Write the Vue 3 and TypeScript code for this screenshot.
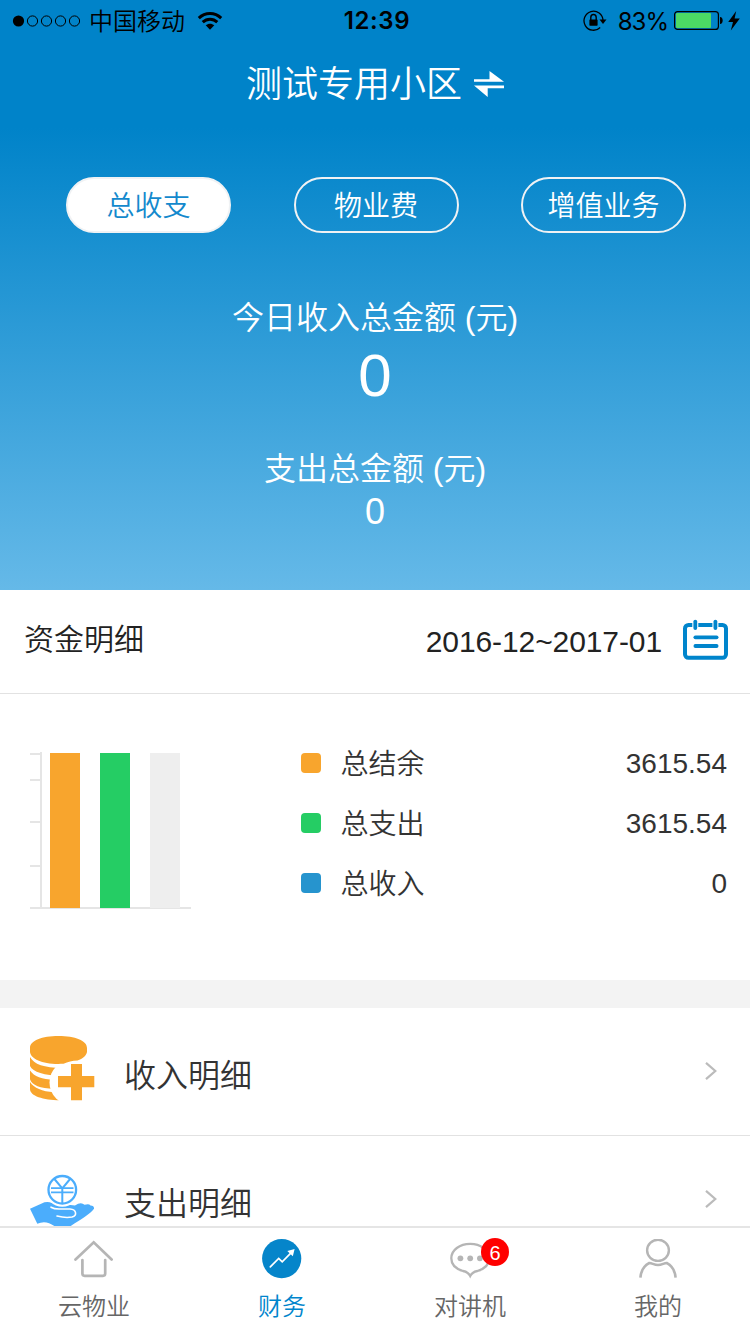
<script setup lang="ts">
import { ref } from 'vue'

interface Amount {
  label: string
  value: string
  tone: string
}

interface Bar {
  x: number
  color: string
}

const segments = ['总收支', '物业费', '增值业务']
const activeSegment = ref(0)

const amounts: Amount[] = [
  { label: '总结余', value: '3615.54', tone: 'orange' },
  { label: '总支出', value: '3615.54', tone: 'green' },
  { label: '总收入', value: '0', tone: 'blue' },
]

const bars: Bar[] = [
  { x: 20, color: '#f8a52d' },
  { x: 70, color: '#25cd64' },
  { x: 120, color: '#eeeeee' },
]
const ticks = [1, 27, 69, 113]
const signalDots = [20.5, 34.5, 48.5, 62.5]
</script>

<template>
  <div class="screen">
    <header class="hero">
      <div class="status">
        <div class="status-side">
          <svg class="signal" width="70" height="14" viewBox="0 0 70 14">
            <circle cx="6.5" cy="7" r="5.6" />
            <circle v-for="x in signalDots" :key="x" :cx="x" cy="7" r="5.1" fill="none" stroke="#000" stroke-width="1" />
          </svg>
          <span class="carrier">中国移动</span>
          <svg class="wifi" width="26" height="20" viewBox="0 0 26 20">
            <g fill="none" stroke="#000" stroke-width="3">
              <path d="M1.8 7.2C8.2 1 17.8 1 24.2 7.2" />
              <path d="M5.7 11.2C10 7.2 16 7.2 20.3 11.2" />
            </g>
            <path d="M8.7 14.3C11.3 12.1 14.7 12.1 17.3 14.3L13 18.7Z" />
          </svg>
        </div>
        <span class="clock">12:39</span>
        <div class="status-side end">
          <svg class="lock" width="24" height="22" viewBox="0 0 24 22">
            <path d="M17.2 17.5A9.5 9.5 0 1 1 20 10.5" fill="none" stroke="#000" stroke-width="1.3" />
            <path d="M16.5 9.5H23.5L20 14Z" />
            <path d="M7.8 10V7.5a2.7 3 0 0 1 5.4 0V10" fill="none" stroke="#000" stroke-width="1.4" />
            <rect x="6.4" y="9.4" width="8.2" height="6.3" rx=".7" />
          </svg>
          <span class="percent">83%</span>
          <svg class="battery" width="50" height="20" viewBox="0 0 50 20">
            <rect x=".6" y=".6" width="43.8" height="17.8" rx="3" fill="none" stroke="#000" stroke-width="1.2" />
            <rect x="2" y="2" width="35" height="15" rx="1" fill="#4cd964" />
            <path d="M46 6c3.6 0 3.6 7 0 7Z" />
          </svg>
          <svg class="bolt" width="12" height="20" viewBox="0 0 12 20">
            <path d="M8.2 0L.2 11H5L2.8 19.5L11.8 7.6H6.6Z" />
          </svg>
        </div>
      </div>

      <div class="title">
        <span>测试专用小区</span>
        <svg width="30" height="28" viewBox="0 0 30 28" fill="#fff">
          <path d="M0 9.2H15.5V1L30 11.8H0Z" />
          <path d="M30 18.2H13.7V27L0 15.6H30Z" />
        </svg>
      </div>

      <nav class="segments">
        <button
          v-for="(name, i) in segments"
          :key="name"
          type="button"
          :class="['segment', { active: i === activeSegment }]"
          @click="activeSegment = i"
        >{{ name }}</button>
      </nav>

      <div class="totals">
        <div class="total-label">今日收入总金额 (元)</div>
        <div class="total-main">0</div>
        <div class="total-label second">支出总金额 (元)</div>
        <div class="total-sub">0</div>
      </div>
    </header>

    <main class="content">
      <section class="range">
        <h2>资金明细</h2>
        <span class="dates">2016-12~2017-01</span>
        <svg width="46" height="42" viewBox="0 0 46 42" fill="none" stroke="#0085cc" stroke-linecap="round">
          <rect x="3" y="6" width="41" height="32.8" rx="3.5" stroke-width="4" />
          <g stroke="#fff" stroke-width="6" stroke-linecap="butt">
            <path d="M13.3 1V12" /><path d="M33.4 1V12" />
          </g>
          <g stroke-width="3.8">
            <path d="M13.3 2.6V9" /><path d="M33.4 2.6V9" />
            <path d="M13.4 18.3H34.6" /><path d="M13.4 27H34.6" />
          </g>
        </svg>
      </section>

      <section class="summary">
        <svg class="chart" width="162" height="158" viewBox="0 0 162 158">
          <g fill="#e5e5e5">
            <rect x="10" y="0" width="2" height="156" />
            <rect x="0" y="155" width="161" height="2" />
            <rect v-for="y in ticks" :key="y" x="0" :y="y" width="10" height="2" />
          </g>
          <rect v-for="bar in bars" :key="bar.x" :x="bar.x" y="1" width="30" height="155" :fill="bar.color" />
        </svg>
        <ul class="amounts">
          <li v-for="row in amounts" :key="row.label">
            <i :class="['swatch', row.tone]"></i>
            <span>{{ row.label }}</span>
            <b>{{ row.value }}</b>
          </li>
        </ul>
      </section>

      <section class="links">
        <a class="link">
          <svg class="link-icon coins" width="66" height="66" viewBox="0 0 66 66">
            <g fill="#f8a52d">
              <path d="M0 21C4 28.5 14 31.8 32 31.8V39.8C14 39.5 3 36 0 30Z" />
              <path d="M0 34.5C4 40.5 12 43.4 24 43.8V53C10 52 2 49.5 0 43.2Z" />
              <path d="M0 46C4 52 12 55.6 24 56.2L30 64.3C13 64 0 60 0 53Z" />
            </g>
            <circle cx="42.3" cy="46.5" r="22.8" fill="#fff" />
            <path d="M0 16V12C0 4.5 12 0 28.5 0S57 4.5 57 12V16C56 20 53 22.8 47.5 24.4C42 24.6 38 25.6 33.5 27.8C14 29 1 23.5 0 16Z" fill="#f8a52d" />
            <path d="M41 28H52V40H64.3V51.3H52V64.3H41V51.3H28V40H41Z" fill="#f8a52d" />
          </svg>
          <span>收入明细</span>
          <svg class="chevron" width="14" height="20" viewBox="0 0 14 20"><path d="M2 1.8L11.3 10L2 18.2" /></svg>
        </a>
        <a class="link">
          <svg class="link-icon hand" width="66" height="66" viewBox="0 0 66 66">
            <path fill="#4badfc" d="M0 36.8L11.7 31.5Q16.7 29 22 31L45 33.5Q51 29.3 54.5 32.8Q59 31.3 60.5 33.4Q64.5 33.8 64 36.8C61 41.5 50 48 40 54.5H25Q16 47.6 7.3 51.8Z" />
            <circle cx="32.3" cy="17.8" r="17" fill="#fff" />
            <path d="M21 35.2Q24 36.9 29 37H40C46.5 37.4 47.5 43.5 42 45C37 46 31.5 45.2 27 44" fill="none" stroke="#fff" stroke-width="1.6" stroke-linecap="round" />
            <g fill="none" stroke="#4badfc" stroke-width="2.3">
              <circle cx="32.3" cy="17.8" r="13.8" />
              <path d="M24 6.5L32.3 16.5L40.5 6.5M32.3 16.5V31" stroke-width="2" />
              <path d="M21 16.2H43.5M21 20.4H43.5" stroke-width="1.8" />
            </g>
          </svg>
          <span>支出明细</span>
          <svg class="chevron" width="14" height="20" viewBox="0 0 14 20"><path d="M2 1.8L11.3 10L2 18.2" /></svg>
        </a>
      </section>
    </main>

    <footer class="tabs">
      <a class="tab">
        <svg width="42" height="42" viewBox="0 0 42 42">
          <path d="M2.5 20.5L20.7 3.3L38.6 20.5M9.4 21V34.6Q9.4 36.8 11.6 36.8H30Q32.2 36.8 32.2 34.6V21" stroke-width="2.7" />
        </svg>
        <span>云物业</span>
      </a>
      <a class="tab current">
        <svg width="42" height="42" viewBox="0 0 42 42">
          <circle cx="20.7" cy="19.6" r="19.6" fill="#0585ca" stroke="none" />
          <path d="M9.3 27.9L17.7 19.4L21.2 22.9L31 12.9" stroke="#fff" stroke-width="1.7" />
          <path d="M33.6 10L26.3 11.9L31.8 17.2Z" fill="#fff" stroke="none" />
        </svg>
        <span>财务</span>
      </a>
      <a class="tab">
        <div class="with-badge">
          <svg width="42" height="42" viewBox="0 0 42 42">
            <path d="M14 32C7 30 2.3 25.5 2.3 19.3C2.3 11 10.7 4.9 21.2 4.9S40.1 11 40.1 19.3C40.1 25.5 35.4 30 28.4 32C24.5 32.6 22.6 34.2 21.2 37C19.8 34.2 17.9 32.6 14 32Z" stroke-width="2.3" />
            <g fill="#b5b5b5" stroke="none">
              <circle cx="11.4" cy="19.3" r="2.9" /><circle cx="21.2" cy="19.3" r="2.9" /><circle cx="30.9" cy="19.3" r="2.9" />
            </g>
          </svg>
          <em class="badge">6</em>
        </div>
        <span>对讲机</span>
      </a>
      <a class="tab">
        <svg width="42" height="42" viewBox="0 0 42 42">
          <ellipse cx="21" cy="11.3" rx="10.9" ry="10.6" stroke-width="2.4" />
          <path d="M3.4 38.7C4 32 7.2 26.7 12 24.1C14.5 23.7 17 26 21 26S27.5 23.7 30 24.1C34.8 26.7 38 32 38.6 38.7" stroke-width="2.6" stroke-linecap="butt" />
        </svg>
        <span>我的</span>
      </a>
    </footer>
  </div>
</template>

<style>
body {
  margin: 0;
  background: #fff;
}
</style>

<style scoped>
* {
  box-sizing: border-box;
}

svg {
  display: block;
  flex: none;
}

.screen {
  display: flex;
  flex-direction: column;
  width: 750px;
  height: 1334px;
  overflow: hidden;
  color: #333;
  background: #fff;
  font-family: "Liberation Sans", "Noto Sans CJK SC DemiLight", "Noto Sans CJK SC", sans-serif;
  font-weight: 350;
}

.hero {
  flex: none;
  height: 590px;
  color: #fff;
  background: linear-gradient(#0083c9 0, #0083c9 128px, #65b9e8 590px);
}

.status {
  display: grid;
  grid-template-columns: 1fr auto 1fr;
  align-items: center;
  height: 41px;
  padding: 0 10px 0 12px;
  color: #000;
}

.status-side {
  display: flex;
  align-items: center;
}

.end {
  justify-content: flex-end;
}

.carrier {
  margin-left: 7px;
  padding-top: 2px;
  font-size: 24px;
  line-height: 38px;
}

.wifi {
  margin-left: 12px;
}

.clock {
  margin-left: 2px;
  font-family: Inter, sans-serif;
  font-size: 24px;
  font-weight: 600;
  letter-spacing: .6px;
}

.percent {
  margin: 1px 6px 0 12px;
  font-family: Inter, sans-serif;
  font-size: 24px;
  font-weight: 400;
  letter-spacing: -1px;
}

.bolt {
  margin-left: 4px;
}

.lock {
  margin-right: -1px;
}

.title {
  display: flex;
  align-items: center;
  justify-content: center;
  gap: 12px;
  height: 86px;
  font-size: 36px;
}

.title span {
  padding-top: 2px;
  line-height: 84px;
}

.segments {
  display: flex;
  justify-content: space-between;
  margin: 50px 64px 0 66px;
}

.segment {
  width: 165px;
  height: 56px;
  padding: 3px 0 0;
  border: 2px solid #f0f2f4;
  border-radius: 28px;
  color: #fff;
  background: transparent;
  font: inherit;
  font-size: 28px;
  line-height: 49px;
}

.segment.active {
  color: #1389cd;
  background: #fff;
}

.totals {
  padding-top: 62px;
  text-align: center;
}

.total-label {
  font-size: 32px;
  line-height: 46px;
}

.total-main {
  height: 70px;
  font-size: 60px;
  line-height: 70px;
}

.total-label.second {
  margin-top: 35px;
}

.total-sub {
  font-size: 36px;
  line-height: 40px;
}

.content {
  flex: 1;
  min-height: 0;
  overflow: hidden;
}

.range {
  display: flex;
  align-items: center;
  height: 104px;
  padding: 0 22px 4px 24px;
  border-bottom: 1px solid #e2e2e2;
  color: #222;
}

.range h2 {
  flex: 1;
  margin: 0;
  padding-top: 1px;
  font-size: 30px;
  font-weight: 350;
  line-height: 40px;
}

.dates {
  margin-right: 20px;
  padding-top: 5px;
  font-size: 30px;
  line-height: 40px;
  letter-spacing: -.1px;
}

.summary {
  display: flex;
  height: 286px;
  padding: 39px 23px 0 30px;
}

.chart {
  margin-top: 19px;
}

.amounts {
  flex: 1;
  margin: 0 0 0 109px;
  padding: 0;
  list-style: none;
}

.amounts li {
  display: flex;
  align-items: center;
  height: 60px;
  font-size: 28px;
  line-height: 40px;
}

.amounts span {
  padding-top: 4px;
}

.amounts b {
  margin-left: auto;
  padding-top: 2px;
  font-weight: 400;
}

.swatch {
  width: 20px;
  height: 20px;
  margin-right: 19.5px;
  border-radius: 4px;
}

.orange { background: #f8a52d; }
.green { background: #25cd64; }
.blue { background: #2694ce; }

.links {
  border-top: 28px solid #f3f3f3;
}

.link {
  display: flex;
  align-items: center;
  height: 128px;
  padding: 0 32px 2px 30px;
  border-bottom: 1px solid #e2e2e2;
  font-size: 32px;
}

.link span {
  flex: 1;
  padding: 10px 0 0 28px;
  line-height: 40px;
}

.coins {
  margin-top: -3px;
}

.hand {
  margin-top: 12px;
}

.chevron {
  fill: none;
  stroke: #bbb;
  stroke-width: 2.2;
}

.tabs {
  display: grid;
  grid-template-columns: repeat(4, 188px);
  flex: none;
  height: 108px;
  border-top: 2px solid #e5e5e5;
  background: #fff;
}

.tab {
  display: flex;
  flex-direction: column;
  align-items: center;
  padding-top: 11px;
  color: #666;
  font-size: 24px;
}

.tab svg {
  fill: none;
  stroke: #b5b5b5;
  stroke-linecap: round;
}

.tab span {
  margin-top: 9px;
  line-height: 34px;
}

.tab.current {
  color: #0085cc;
}

.with-badge {
  position: relative;
}

.badge {
  position: absolute;
  top: -1px;
  left: 32px;
  width: 28px;
  height: 28px;
  border-radius: 50%;
  color: #fff;
  background: #f00;
  font-size: 20px;
  font-style: normal;
  line-height: 30px;
  text-align: center;
}
</style>
